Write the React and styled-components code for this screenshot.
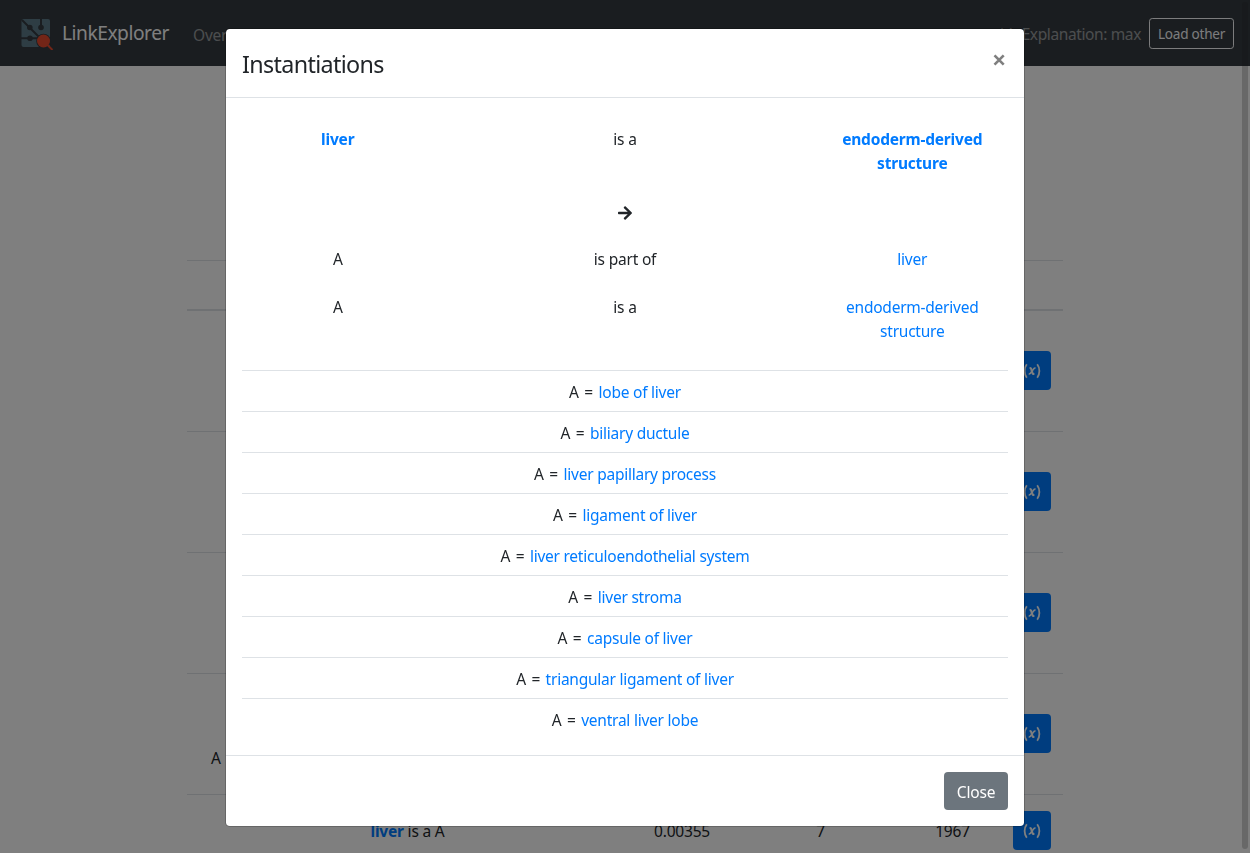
import React from "react";
import styled, { createGlobalStyle } from "styled-components";
import { FaArrowRight } from "react-icons/fa";

const Global = createGlobalStyle`
  *, *::before, *::after { box-sizing: border-box; }
  html, body { margin: 0; height: 100%; overflow: hidden; }
  body {
    font-family: "Segoe UI", "Noto Sans", "Open Sans", sans-serif;
    font-size: 15.5px;
    line-height: 24px;
    letter-spacing: -0.2px;
    color: #212529;
    background: #fff;
  }
`;

const Page = styled.div`
  height: 853px;
  overflow: hidden;
`;

const Navbar = styled.nav`
  display: flex;
  align-items: center;
  height: 66px;
  padding: 0 16px 0 21px;
  background: #343a40;
`;

const Brand = styled.div`
  display: flex;
  align-items: center;
  gap: 8px;
  width: 164px;
  font-size: 19.2px;
  letter-spacing: -0.47px;
  color: #fff;
  white-space: nowrap;
`;

const NavLinks = styled.div`
  display: flex;
  flex: 1;
  gap: 17px;
  margin-left: 8px;
  padding-top: 3px;
  color: rgba(255, 255, 255, 0.5);
`;

const NavText = styled.span`
  margin-right: 8px;
  padding-top: 2px;
  letter-spacing: -0.38px;
  color: rgba(255, 255, 255, 0.5);
  white-space: nowrap;
`;

const LoadButton = styled.button`
  width: 85px;
  height: 31px;
  padding: 2px 0 0;
  border: 1px solid #f8f9fa;
  border-radius: 3.2px;
  background: transparent;
  color: #f8f9fa;
  font: inherit;
  font-size: 13.6px;
  line-height: 20px;
  letter-spacing: -0.25px;
`;

const Rules = styled.main`
  width: 876px;
  margin: 194px auto 0;
`;

const RulesHead = styled.div`
  height: 51px;
  border-top: 1px solid #dee2e6;
  border-bottom: 2px solid #dee2e6;
`;

const RuleRow = styled.div`
  display: grid;
  grid-template-columns: 441px 108px 169px 95px 63px;
  align-items: center;
  height: ${(p) => (p.$short ? 73 : 121)}px;
  border-bottom: 1px solid #dee2e6;
  text-align: center;
`;

const RuleBody = styled.div`
  padding-left: ${(p) => (p.$start ? 24 : 0)}px;
  text-align: ${(p) => (p.$start ? "left" : "center")};
`;

const VarButton = styled.button`
  display: flex;
  align-items: center;
  justify-content: center;
  width: 38px;
  height: 39px;
  margin: 0 0 1px 13px;
  padding: 0;
  border: 0;
  border-radius: 4px;
  background: #007bff;
  color: #fff;
`;

const Link = styled.a`
  color: #007bff;
  font-weight: ${(p) => (p.$strong ? 700 : 400)};
  letter-spacing: ${(p) => (p.$strong ? -0.2 : -0.24)}px;
`;

const Backdrop = styled.div`
  position: fixed;
  inset: 0;
  padding-top: 28px;
  background: rgba(0, 0, 0, 0.5);
`;

const ScrollThumb = styled.div`
  position: fixed;
  top: 2px;
  right: 2px;
  width: 6px;
  height: 847px;
  border-radius: 3px;
  background: rgba(20, 20, 20, 0.21);
`;

const Modal = styled.section`
  width: 800px;
  margin: 0 auto;
  border: 1px solid rgba(0, 0, 0, 0.2);
  border-radius: 4.8px;
  background: #fff;
  background-clip: padding-box;
`;

const ModalHeader = styled.header`
  display: flex;
  justify-content: space-between;
  height: 69px;
  padding: 16px;
  border-bottom: 1px solid #dee2e6;
`;

const Title = styled.h5`
  margin: 0;
  font-size: 23.3px;
  font-weight: 400;
  line-height: 38px;
  letter-spacing: -0.65px;
`;

const CloseIcon = styled.svg`
  width: 12px;
  height: 12px;
  margin: 9px 3px 0 0;
`;

const ModalBody = styled.div`
  padding: 16px;
`;

const Triple = styled.div`
  display: grid;
  grid-template-columns: 1fr 2fr 1fr;
  text-align: center;
`;

const Cell = styled.div`
  padding: 13px 12px 11px;
`;

const ArrowRow = styled.div`
  display: flex;
  justify-content: center;
  height: 48px;
  padding-top: 19px;
`;

const Instances = styled.ul`
  margin: 16px 0 0;
  padding: 0;
  list-style: none;
  text-align: center;
`;

const Instance = styled.li`
  padding: 9px 8px 7px;
  border-top: 1px solid #dee2e6;
`;

const Variable = styled.span`
  letter-spacing: 0.65px;
`;

const ModalFooter = styled.footer`
  display: flex;
  justify-content: flex-end;
  padding: 16px;
  border-top: 1px solid #dee2e6;
`;

const CloseButton = styled.button`
  width: 64px;
  height: 38px;
  padding: 2px 0 0;
  border: 0;
  border-radius: 4px;
  background: #6c757d;
  color: #fff;
  font: inherit;
  letter-spacing: -0.2px;
`;

const Logo = () => (
  <svg width="33" height="33" viewBox="0 0 33 33">
    <rect x="0.5" y="2" width="28.5" height="28" rx="2" fill="#5c7b88" />
    <g stroke="#343a40" strokeWidth="2" fill="none">
      <path d="M1 3L20 22M20 1V10M0 21.3H20" />
    </g>
    <g fill="#343a40">
      <circle cx="8.8" cy="10.5" r="2.8" />
      <circle cx="20" cy="10.5" r="2.8" />
      <circle cx="9" cy="21.3" r="2.8" />
    </g>
    <circle cx="22.5" cy="24" r="7.3" fill="#343a40" />
    <path d="M26 27.5L31.5 33" stroke="#e64a2e" strokeWidth="2" />
    <circle cx="22.5" cy="24" r="6.5" fill="#e64a2e" />
  </svg>
);

const VarIcon = () => (
  <svg width="18" height="16" viewBox="0 0 18 16" fill="none" stroke="#fff" strokeWidth="1.8">
    <path d="M3.8 1.2C.9 5 .9 11 3.8 14.8M14.2 1.2c2.9 3.8 2.9 9.8 0 13.6" />
    <path strokeWidth="2.1" d="M6.6 5h.5c.7 0 1 .4 1.2 1.1l1.1 3.8c.2.7.5 1.1 1.2 1.1h.8" />
    <path strokeWidth="1.6" d="M12.5 4.9c-1.5 0-2.2 1.3-3.3 3.1S7.2 11.1 5.7 11.1" />
  </svg>
);

const instances = [
  "lobe of liver",
  "biliary ductule",
  "liver papillary process",
  "ligament of liver",
  "liver reticuloendothelial system",
  "liver stroma",
  "capsule of liver",
  "triangular ligament of liver",
  "ventral liver lobe",
];

export default function App() {
  return (
    <Page>
      <Global />
      <Navbar>
        <Brand><Logo />LinkExplorer</Brand>
        <NavLinks>
          <span>Overview</span>
          <span>Entities</span>
          <span>Predictions</span>
        </NavLinks>
        <NavText>with Explanation: max</NavText>
        <LoadButton>Load other</LoadButton>
      </Navbar>
      <Rules>
        <RulesHead />
        {[0, 1, 2, 3].map((i) => (
          <RuleRow key={i}>
            <RuleBody $start>{i === 3 && <><br /><br />A</>}</RuleBody>
            <span /><span /><span />
            <VarButton><VarIcon /></VarButton>
          </RuleRow>
        ))}
        <RuleRow $short>
          <RuleBody><Link $strong>liver</Link> is a A</RuleBody>
          <span>0.00355</span>
          <span>7</span>
          <span>1967</span>
          <VarButton><VarIcon /></VarButton>
        </RuleRow>
      </Rules>
      <Backdrop>
        <Modal>
          <ModalHeader>
            <Title>Instantiations</Title>
            <CloseIcon viewBox="0 0 12 12"><path d="M1.5 1.3L10.7 10.7M10.7 1.3L1.5 10.7" stroke="#7f7f7f" strokeWidth="2.6" /></CloseIcon>
          </ModalHeader>
          <ModalBody>
            <Triple>
              <Cell><Link $strong>liver</Link></Cell>
              <Cell>is a</Cell>
              <Cell><Link $strong>endoderm-derived structure</Link></Cell>
            </Triple>
            <ArrowRow><FaArrowRight size={16} /></ArrowRow>
            <Triple>
              <Cell>A</Cell>
              <Cell>is part of</Cell>
              <Cell><Link>liver</Link></Cell>
            </Triple>
            <Triple>
              <Cell>A</Cell>
              <Cell>is a</Cell>
              <Cell><Link>endoderm-derived structure</Link></Cell>
            </Triple>
            <Instances>
              {instances.map((name) => (
                <Instance key={name}><Variable>A = </Variable><Link>{name}</Link></Instance>
              ))}
            </Instances>
          </ModalBody>
          <ModalFooter><CloseButton>Close</CloseButton></ModalFooter>
        </Modal>
      </Backdrop>
      <ScrollThumb />
    </Page>
  );
}
